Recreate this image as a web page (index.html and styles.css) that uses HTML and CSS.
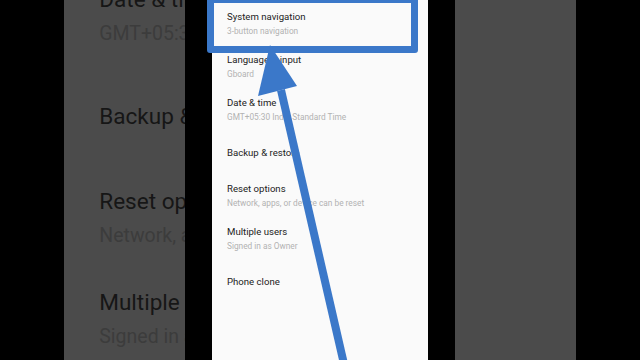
FILE: index.html
```html
<!DOCTYPE html>
<html lang="en">
<head>
    <meta charset="UTF-8">
    <meta name="viewport" content="width=device-width, initial-scale=1.0">
    <title>System navigation</title>
    <link rel="stylesheet" href="styles.css">
</head>
<body>
    <div class="stage">
        <!-- zoomed, dimmed copy of the screen on the left -->
        <div class="side">
            <div class="list list-zoom">
                <div class="item"><span class="title">Date &amp; time</span><span class="sub">GMT+05:30 India Standard Time</span></div>
                <div class="item"><span class="title">Backup &amp; restore</span></div>
                <div class="item"><span class="title">Reset options</span><span class="sub">Network, apps, or device can be reset</span></div>
                <div class="item"><span class="title">Multiple users</span><span class="sub">Signed in as Owner</span></div>
                <div class="item"><span class="title">Phone clone</span></div>
            </div>
        </div>

        <div class="phone">
            <div class="list">
                <div class="item"><span class="title">System navigation</span><span class="sub">3-button navigation</span></div>
                <div class="item"><span class="title">Language &amp; input</span><span class="sub">Gboard</span></div>
                <div class="item"><span class="title">Date &amp; time</span><span class="sub">GMT+05:30 India Standard Time</span></div>
                <div class="item"><span class="title">Backup &amp; restore</span></div>
                <div class="item"><span class="title">Reset options</span><span class="sub">Network, apps, or device can be reset</span></div>
                <div class="item"><span class="title">Multiple users</span><span class="sub">Signed in as Owner</span></div>
                <div class="item"><span class="title">Phone clone</span></div>
            </div>
        </div>

        <div class="side"></div>

        <!-- annotation: highlight box + arrow -->
        <div class="highlight"></div>
        <svg class="arrow" width="640" height="360" viewBox="0 0 640 360">
            <line x1="281" y1="90" x2="344" y2="364" stroke="#3b78c9" stroke-width="8"/>
            <polygon points="270,45 258,96 297,86" fill="#3b78c9"/>
        </svg>
    </div>
</body>
</html>
```
FILE: styles.css
```css
html, body {
    margin: 0;
    height: 100%;
    overflow: hidden;
    background: #000;
    font-family: Roboto, 'Noto Sans', sans-serif;
}
.stage {
    position: relative;
    width: 640px;
    height: 360px;
    display: flex;
    justify-content: center;
    gap: 27px;
}
.side {
    width: 121px;
    background: #4b4b4b;
    overflow: hidden;
    --s: 2.35;
}
.phone {
    width: 216px;
    background: #fafafa;
    overflow: hidden;
    --s: 1;
}
.list {
    display: flex;
    flex-direction: column;
    padding-top: 2.5px;
}
.list-zoom {
    margin-top: -34px;
    padding-top: 0;
}
.item {
    min-height: calc(43px * var(--s));
    padding-left: calc(15px * var(--s));
    display: flex;
    flex-direction: column;
    justify-content: center;
    gap: calc(1px * var(--s));
    white-space: nowrap;
}
.title {
    font-size: calc(9.6px * var(--s));
    line-height: calc(14px * var(--s));
    color: #222;
}
.sub {
    font-size: calc(8.3px * var(--s));
    line-height: calc(13px * var(--s));
    color: #b2b2b2;
}
.side .title {
    color: #161616;
}
.side .sub {
    color: #3c3c3c;
}
.highlight {
    position: absolute;
    left: 207px;
    top: -4px;
    width: 211px;
    height: 57px;
    box-sizing: border-box;
    border: 7px solid #3b78c9;
    border-radius: 3px;
}
.arrow {
    position: absolute;
    left: 0;
    top: 0;
}
```
